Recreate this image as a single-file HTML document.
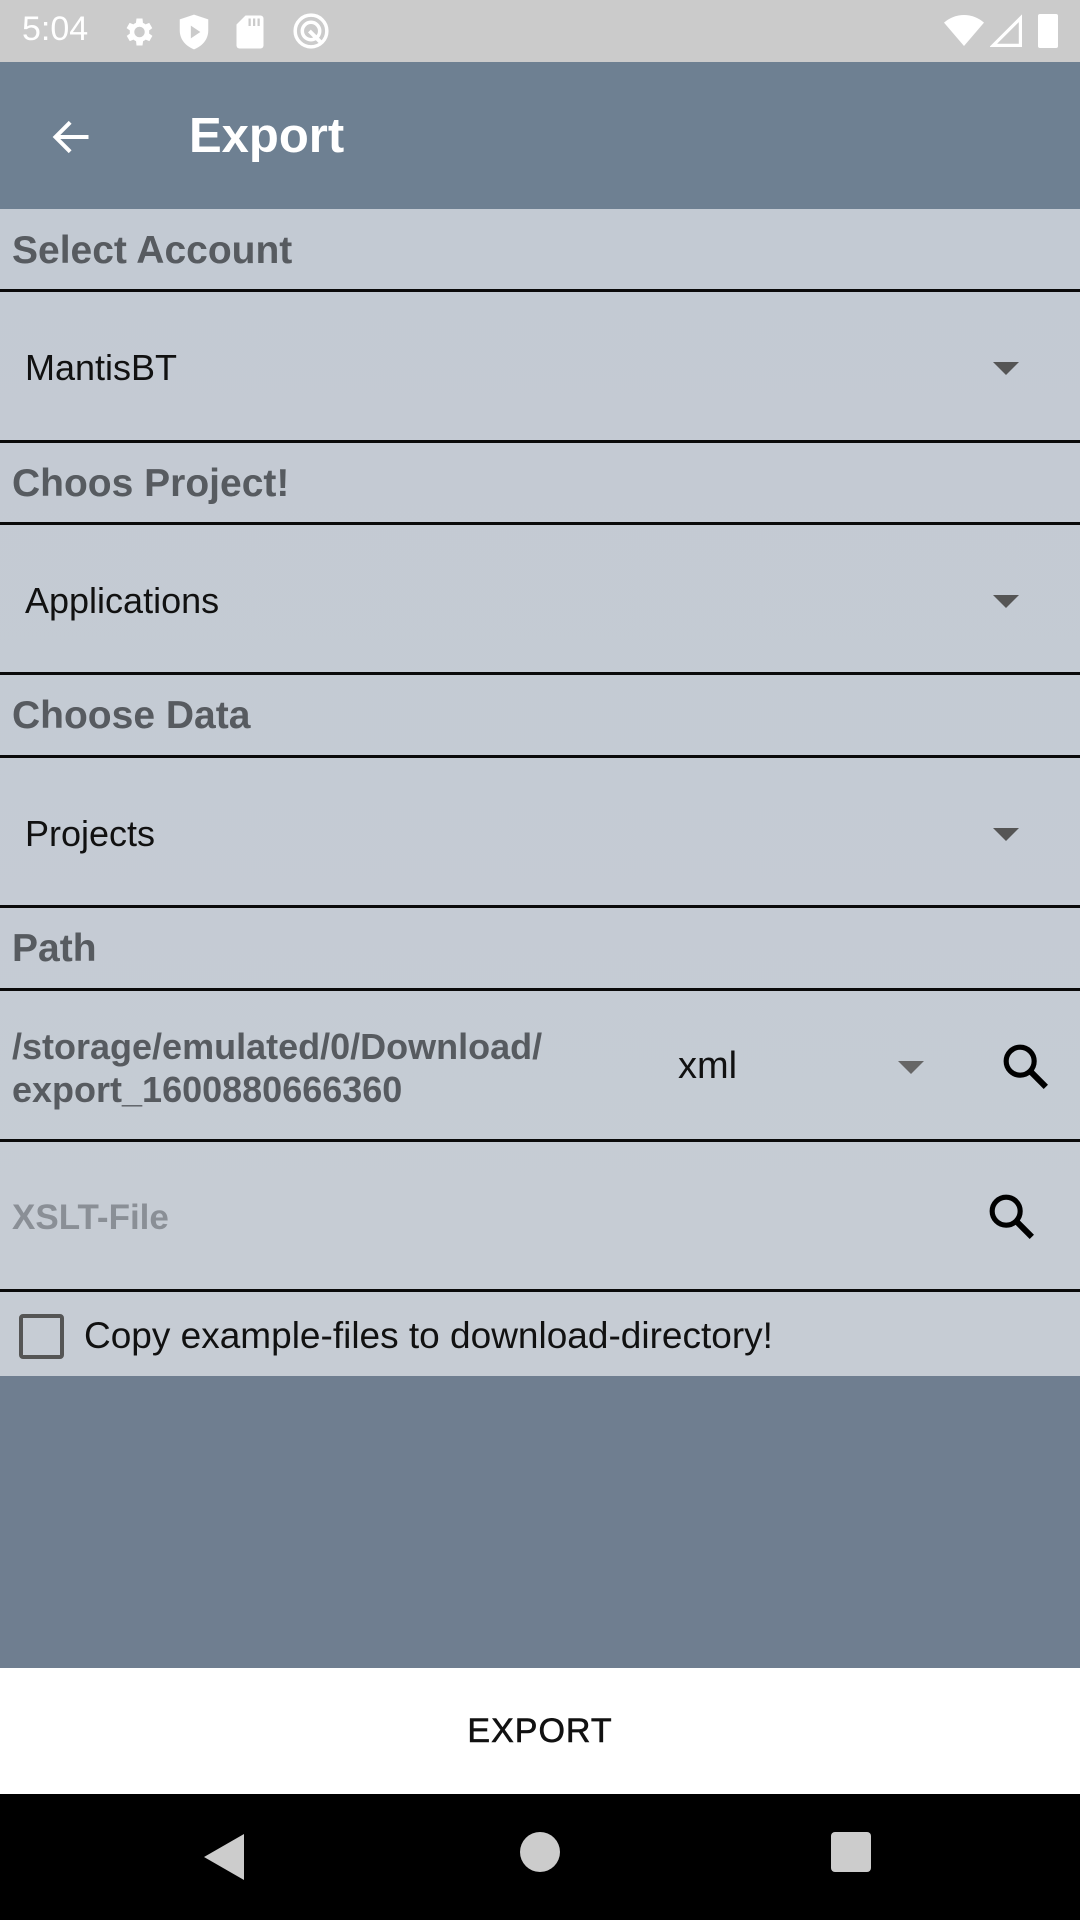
<!DOCTYPE html>
<html><head><meta charset="utf-8"><style>
*{margin:0;padding:0;box-sizing:border-box}
body{width:1080px;height:1920px;position:relative;overflow:hidden;font-family:"Liberation Sans",sans-serif;background:#6e7d8e}
.abs{position:absolute;left:0;width:1080px}
.status{top:0;height:62px;background:#cbcbcb;color:#fff}
.bar{top:62px;height:147px;background:#6e8092}
.content{top:209px;height:1167px;background:linear-gradient(180deg,#c3cad3,#c6ccd4)}
.dark{top:1376px;height:292px;background:#6f7e90}
.btn{top:1668px;height:126px;background:#fff;text-align:center;line-height:126px;font-size:34px;color:#111;letter-spacing:1px;-webkit-text-stroke:0.6px #111}
.nav{top:1794px;height:126px;background:#000}
.line{position:absolute;left:0;width:1080px;height:3px;background:#0a0a0a}
.hdr{position:absolute;left:12px;font-size:39px;font-weight:bold;color:#575b60}
.item{position:absolute;left:25px;font-size:36px;color:#111}
.tri{position:absolute;width:0;height:0;border-left:13px solid transparent;border-right:13px solid transparent;border-top:13px solid #555}
</style></head><body>
<div class="abs status">
<div style="position:absolute;left:22px;top:10px;font-size:34px;color:#fff">5:04</div>
<svg style="position:absolute;left:120px;top:14px" width="36" height="36" viewBox="0 0 24 24"><path fill="#fff" d="M19.4 13a7.5 7.5 0 000-2l2.1-1.6-2-3.5-2.5 1a7 7 0 00-1.7-1L15 3h-4l-.4 2.9a7 7 0 00-1.7 1l-2.5-1-2 3.5L6.6 11a7.5 7.5 0 000 2l-2.1 1.6 2 3.5 2.5-1a7 7 0 001.7 1L11 21h4l.4-2.9a7 7 0 001.7-1l2.5 1 2-3.5zM13 15.5a3.5 3.5 0 110-7 3.5 3.5 0 010 7z"/></svg>
<svg style="position:absolute;left:178px;top:13px" width="32" height="38" viewBox="0 0 20 24"><path fill="#fff" d="M10 1L1 4v7c0 6 4 10 9 12 5-2 9-6 9-12V4z"/><path fill="#cbcbcb" d="M8 8v8l6-4z"/></svg>
<svg style="position:absolute;left:236px;top:14px" width="28" height="36" viewBox="0 0 18 24"><path fill="#fff" d="M6 1h10a2 2 0 012 2v18a2 2 0 01-2 2H2a2 2 0 01-2-2V7z"/><path fill="#cbcbcb" d="M8 3h1.5v5H8zM11 3h1.5v5H11zM14 3h1.5v5H14z"/></svg>
<svg style="position:absolute;left:292px;top:12px" width="38" height="38" viewBox="0 0 24 24"><circle cx="12" cy="12" r="10" fill="none" stroke="#fff" stroke-width="2.2"/><circle cx="12" cy="12" r="5.5" fill="none" stroke="#fff" stroke-width="2.2"/><path d="M11 12l7 7" stroke="#fff" stroke-width="2.5"/></svg>
<svg style="position:absolute;left:944px;top:14px" width="40" height="34" viewBox="0 0 24 20"><path fill="#fff" d="M12 19L0 5a18 18 0 0124 0z"/></svg>
<svg style="position:absolute;left:990px;top:14px" width="32" height="34" viewBox="0 0 20 20"><path fill="none" stroke="#fff" stroke-width="2" d="M2 19L19 2v17z"/></svg>
<div style="position:absolute;left:1038px;top:14px;width:20px;height:34px;background:#fff;border-radius:2px"></div>
</div>
<div class="abs bar">
<svg style="position:absolute;left:50px;top:53px" width="44" height="44" viewBox="0 0 24 24"><path d="M21 12H4M11 4l-8 8 8 8" fill="none" stroke="#fff" stroke-width="2.2"/></svg>
<div style="position:absolute;left:189px;top:46px;font-size:49px;font-weight:600;color:#fff">Export</div>
</div>
<div class="abs content">
<div class="hdr" style="top:20px">Select Account</div>
<div class="line" style="top:80px"></div>
<div class="item" style="top:138px">MantisBT</div>
<div class="tri" style="left:993px;top:153px"></div>
<div class="line" style="top:231px"></div>
<div class="hdr" style="top:253px">Choos Project!</div>
<div class="line" style="top:313px"></div>
<div class="item" style="top:371px">Applications</div>
<div class="tri" style="left:993px;top:386px"></div>
<div class="line" style="top:463px"></div>
<div class="hdr" style="top:485px">Choose Data</div>
<div class="line" style="top:546px"></div>
<div class="item" style="top:604px">Projects</div>
<div class="tri" style="left:993px;top:619px"></div>
<div class="line" style="top:696px"></div>
<div class="hdr" style="top:718px">Path</div>
<div class="line" style="top:779px"></div>
<div class="hdr" style="top:816px;font-size:36px;line-height:43px">/storage/emulated/0/Download/<br>export_1600880666360</div>
<div class="item" style="left:678px;top:836px;font-size:38px">xml</div>
<div class="tri" style="left:898px;top:852px;border-top-color:#666"></div>
<svg style="position:absolute;left:998px;top:830px" width="56" height="56" viewBox="0 0 24 24"><circle cx="9.5" cy="9.5" r="6" fill="none" stroke="#000" stroke-width="2.2"/><path d="M14 14l6.5 6.5" stroke="#000" stroke-width="2.6"/></svg>
<div class="line" style="top:930px"></div>
<div class="hdr" style="top:989px;font-size:35px;color:#8a8f96">XSLT-File</div>
<svg style="position:absolute;left:984px;top:980px" width="56" height="56" viewBox="0 0 24 24"><circle cx="9.5" cy="9.5" r="6" fill="none" stroke="#000" stroke-width="2.2"/><path d="M14 14l6.5 6.5" stroke="#000" stroke-width="2.6"/></svg>
<div class="line" style="top:1080px"></div>
<div style="position:absolute;left:19px;top:1105px;width:45px;height:45px;border:4px solid #555;border-radius:4px"></div>
<div class="item" style="left:84px;top:1106px;font-size:37px">Copy example-files to download-directory!</div>
</div>
<div class="abs dark"></div>
<div class="abs btn">EXPORT</div>
<div class="abs nav">
<svg style="position:absolute;left:204px;top:40px" width="40" height="46" viewBox="0 0 20 23"><path d="M20 0v23L0 11.5z" fill="#ccc"/></svg>
<div style="position:absolute;left:520px;top:38px;width:40px;height:40px;border-radius:50%;background:#ccc"></div>
<div style="position:absolute;left:831px;top:38px;width:40px;height:40px;border-radius:4px;background:#ccc"></div>
</div>
</body></html>
